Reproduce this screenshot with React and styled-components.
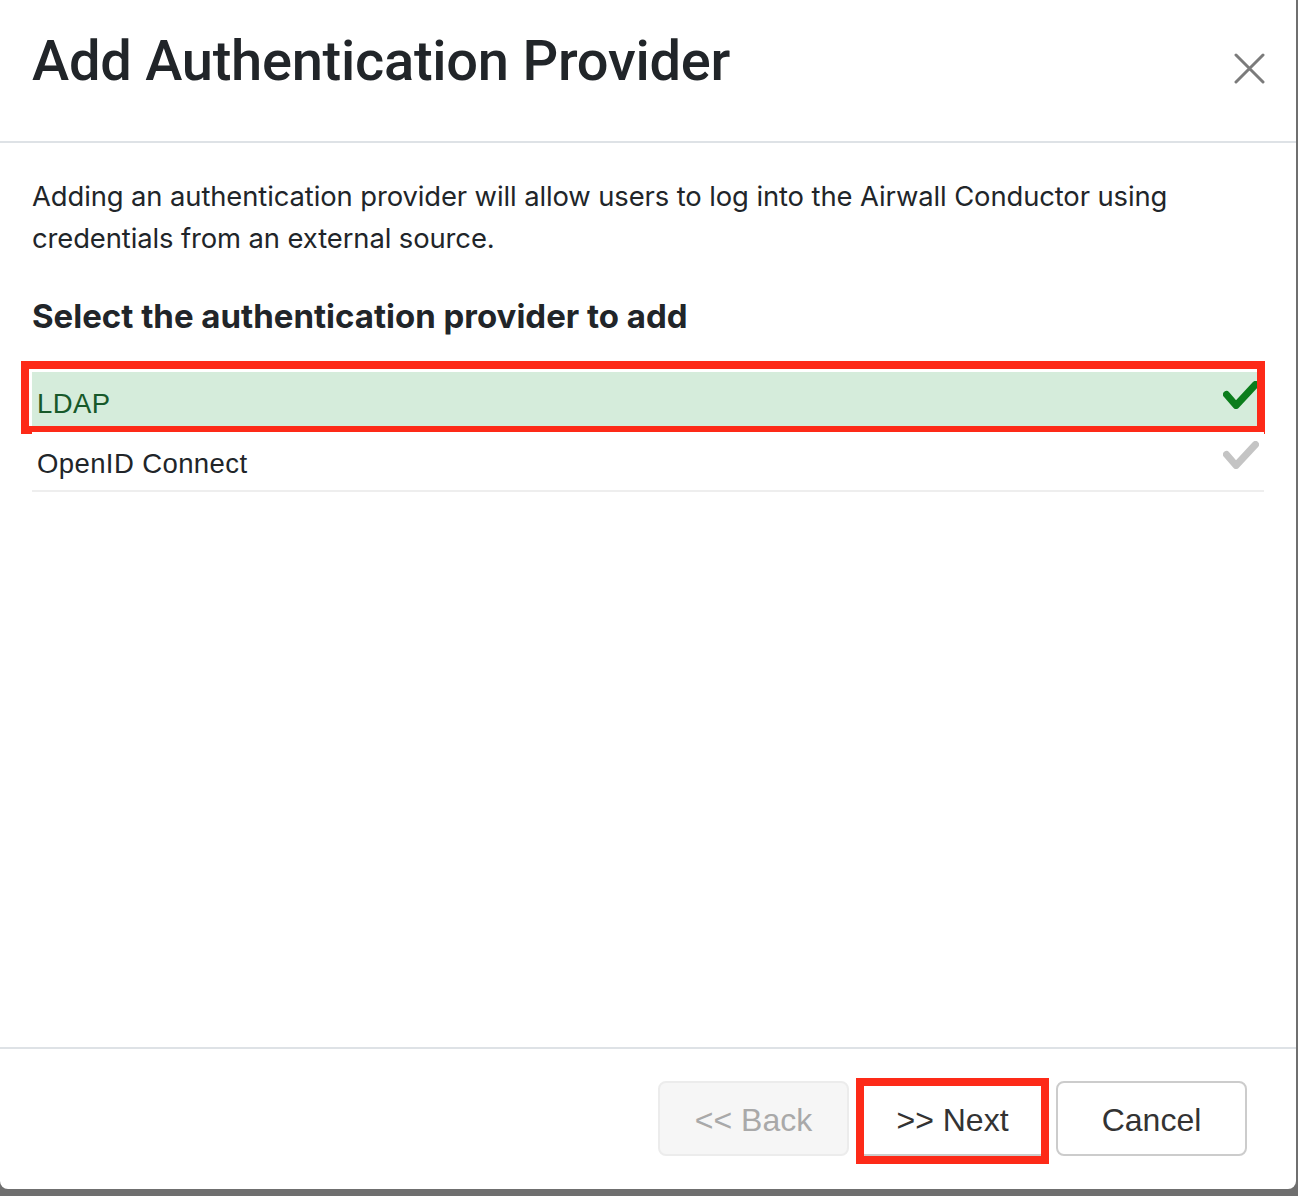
import React from "react";
import styled, { createGlobalStyle } from "styled-components";

const Global = createGlobalStyle`
  html, body { margin: 0; padding: 0; }
  body {
    background: #6f6f6f;
    width: 1298px;
    height: 1196px;
    overflow: hidden;
    font-family: "Liberation Sans", Arial, sans-serif;
  }
`;

const Modal = styled.div`
  width: 1296px;
  height: 1189px;
  background: #ffffff;
  border-radius: 0 0 8px 8px;
  display: flex;
  flex-direction: column;
  box-sizing: border-box;
  color: #212529;
`;

const Header = styled.div`
  height: 143px;
  box-sizing: border-box;
  border-bottom: 2px solid #dee2e6;
  padding: 28px 31px 0 32px;
  display: flex;
  align-items: flex-start;
`;

const Title = styled.h1`
  margin: 0;
  font-family: "Roboto", "Liberation Sans", Arial, sans-serif;
  font-size: 56px;
  font-weight: 500;
  line-height: 1.2;
  color: #212529;
  letter-spacing: -0.25px;
`;

const CloseButton = styled.button`
  margin-left: auto;
  margin-top: 25px;
  width: 31px;
  height: 31px;
  padding: 0;
  border: 0;
  background: transparent;
  display: flex;
  cursor: pointer;
`;

const Body = styled.div`
  flex: 1;
  padding: 32px 32px 0 32px;
  display: flex;
  flex-direction: column;
`;

const Intro = styled.p`
  margin: 0;
  font-family: "Inter", "Liberation Sans", sans-serif;
  font-size: 27.4px;
  line-height: 42px;
  color: #212529;
  letter-spacing: -0.1px;
`;

const SectionTitle = styled.h2`
  margin: 38px 0 0 0;
  font-family: "Inter", "Liberation Sans", sans-serif;
  font-size: 33px;
  font-weight: 700;
  line-height: 38px;
  color: #212529;
  letter-spacing: 0;
`;

const List = styled.div`
  margin-top: 37px;
  display: flex;
  flex-direction: column;
`;

const Row = styled.div`
  position: relative;
  height: 60px;
  box-sizing: border-box;
  padding: 0 5px 0 5px;
  display: flex;
  align-items: center;
  justify-content: space-between;
  background: ${(p) => (p.$selected ? "#d5ecdb" : "#ffffff")};
  color: ${(p) => (p.$selected ? "#17592a" : "#212529")};
  border-bottom: 2px solid ${(p) => (p.$selected ? "transparent" : "#eeeeee")};
  font-family: "Liberation Sans", Arial, sans-serif;
  font-size: 27.5px;
  letter-spacing: 0.4px;
  cursor: pointer;
`;

const RowLabel = styled.span`
  line-height: 1;
  padding-top: 5px;
`;

const Check = styled.svg`
  width: 36px;
  height: 28px;
  margin-bottom: 12px;
  flex: none;
`;

const Highlight = styled.div`
  position: absolute;
  pointer-events: none;
  border: 8px solid #fd2a18;
  top: ${(p) => p.$top}px;
  left: ${(p) => p.$left}px;
  right: ${(p) => p.$right}px;
  bottom: ${(p) => p.$bottom}px;
`;

const Footer = styled.div`
  border-top: 2px solid #dee2e6;
  padding: 32px 49px 33px 0;
  display: flex;
  justify-content: flex-end;
  gap: 8px;
`;

const ButtonWrap = styled.div`
  position: relative;
  display: flex;
`;

const Button = styled.button`
  width: 191px;
  height: 75px;
  box-sizing: border-box;
  border-radius: 8px;
  border: 2px solid ${(p) => (p.disabled ? "#ececec" : "#cccccc")};
  background: ${(p) => (p.disabled ? "#f6f6f6" : "#ffffff")};
  color: ${(p) => (p.disabled ? "#a9a9a9" : "#333333")};
  font-family: "Liberation Sans", Arial, sans-serif;
  font-size: 32px;
  padding: 4px 0 0 0;
  cursor: ${(p) => (p.disabled ? "default" : "pointer")};
`;

const CheckIcon = ({ color }) => (
  <Check viewBox="0 0 36 28">
    <polyline
      points="3.5,13.5 13,24.5 32.5,3.5"
      fill="none"
      stroke={color}
      strokeWidth="7"
      strokeLinecap="round"
      strokeLinejoin="round"
    />
  </Check>
);

export default function App() {
  return (
    <>
      <Global />
      <Modal>
        <Header>
          <Title>Add Authentication Provider</Title>
          <CloseButton aria-label="Close">
            <svg width="31" height="31" viewBox="0 0 31 31">
              <path
                d="M2 2 L29 29 M29 2 L2 29"
                stroke="#7b7b7b"
                strokeWidth="3"
                strokeLinecap="round"
                fill="none"
              />
            </svg>
          </CloseButton>
        </Header>
        <Body>
          <Intro>
            Adding an authentication provider will allow users to log into the Airwall Conductor using
            credentials from an external source.
          </Intro>
          <SectionTitle>Select the authentication provider to add</SectionTitle>
          <List>
            <Row $selected>
              <RowLabel>LDAP</RowLabel>
              <CheckIcon color="#0b7d1c" />
              <Highlight $top={-11} $left={-11} $right={-1} $bottom={-4} />
            </Row>
            <Row>
              <RowLabel>OpenID Connect</RowLabel>
              <CheckIcon color="#c4c4c4" />
            </Row>
          </List>
        </Body>
        <Footer>
          <Button disabled>&lt;&lt; Back</Button>
          <ButtonWrap>
            <Button>&gt;&gt; Next</Button>
            <Highlight $top={-3} $left={-1} $right={-1} $bottom={-8} />
          </ButtonWrap>
          <Button>Cancel</Button>
        </Footer>
      </Modal>
    </>
  );
}
